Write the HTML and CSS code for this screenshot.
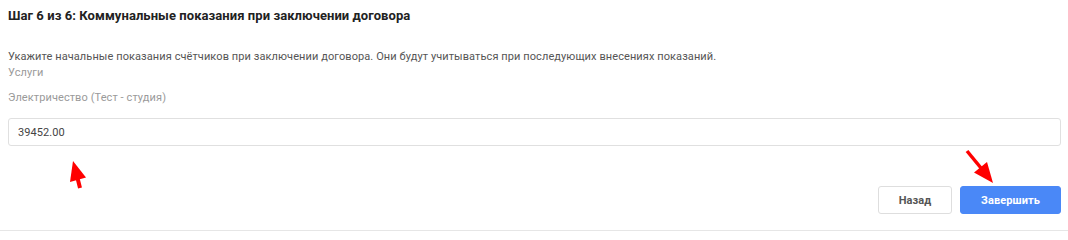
FILE: index.html
```html
<!DOCTYPE html>
<html lang="ru">
<head>
<meta charset="utf-8">
<title>Шаг 6 из 6</title>
<link rel="stylesheet" href="styles.css">
</head>
<body>
<div class="page">
  <h1 class="title">Шаг 6 из 6: Коммунальные показания при заключении договора</h1>
  <p class="desc">Укажите начальные показания счётчиков при заключении договора. Они будут учитываться при последующих внесениях показаний.</p>
  <div class="section">Услуги</div>
  <label class="field-label" for="meter">Электричество (Тест - студия)</label>
  <input class="field-input" id="meter" type="text" value="39452.00">
  <div class="actions">
    <button class="btn btn-back" type="button">Назад</button>
    <button class="btn btn-primary" type="button">Завершить</button>
  </div>
  <svg class="arrows" width="1068" height="232" viewBox="0 0 1068 232" aria-hidden="true">
    <line x1="80" y1="188" x2="77.5" y2="178" stroke="#ff0000" stroke-width="4"/>
    <polygon points="73,161 86,177.5 70,182" fill="#ff0000"/>
    <line x1="967" y1="151" x2="981" y2="168" stroke="#ff0000" stroke-width="3.5"/>
    <polygon points="993,183 987,162 974,172.5" fill="#ff0000"/>
  </svg>
</div>
</body>
</html>
```

FILE: styles.css
```css
html, body {
  margin: 0;
  padding: 0;
  background: #ffffff;
}

body {
  font-family: Roboto, "Liberation Sans", Arial, sans-serif;
  color: #333333;
}

.page {
  position: relative;
  display: flex;
  flex-direction: column;
  padding: 6px 7px 16px 8px;
  border-bottom: 1px solid #e6e6e6;
}

.title {
  margin: 0;
  font-size: 13px;
  line-height: 20px;
  font-weight: 700;
  letter-spacing: 0.07px;
  color: #222222;
}

.desc {
  margin: 23px 0 0;
  font-size: 11px;
  line-height: 16px;
  letter-spacing: 0.09px;
  color: #555555;
}

.section {
  font-size: 11px;
  line-height: 16px;
  letter-spacing: 0.09px;
  color: #9a9a9a;
}

.field-label {
  margin-top: 9px;
  font-size: 11px;
  line-height: 16px;
  letter-spacing: 0.09px;
  color: #9a9a9a;
}

.field-input {
  margin: 12px 0 0;
  box-sizing: border-box;
  height: 28px;
  width: 100%;
  padding: 0 9px;
  border: 1px solid #e0e0e0;
  border-radius: 3px;
  font-family: inherit;
  font-size: 11px;
  letter-spacing: 0.09px;
  color: #444444;
  background: #ffffff;
  outline: none;
}

.actions {
  margin-top: 40px;
  display: flex;
  justify-content: flex-end;
  gap: 8px;
}

.btn {
  box-sizing: border-box;
  height: 28px;
  border-radius: 3px;
  font-family: inherit;
  font-size: 11px;
  font-weight: 700;
  letter-spacing: 0.09px;
  cursor: pointer;
}

.btn-back {
  width: 74px;
  border: 1px solid #dedede;
  background: #ffffff;
  color: #555555;
}

.btn-primary {
  width: 101px;
  border: 1px solid #4a88f7;
  background: #4a88f7;
  color: #ffffff;
}

.arrows {
  position: absolute;
  left: 0;
  top: 0;
  pointer-events: none;
}
```
